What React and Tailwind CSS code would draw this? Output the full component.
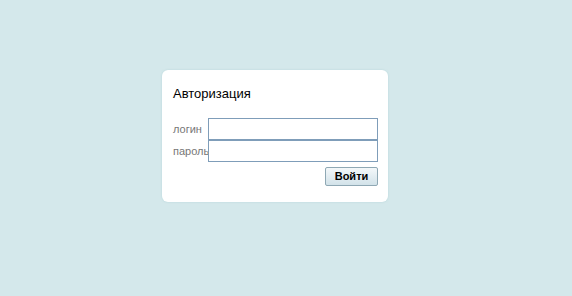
export default function App() {
  return (
    <div
      className="w-full h-[296px] bg-[#d4e8eb] pl-[162px] pt-[70px]"
      style={{ fontFamily: '"Liberation Sans", Arial, sans-serif' }}
    >
      <div className="w-[226px] h-[132px] bg-white rounded-[6px] shadow-[0_0_2px_rgba(160,200,205,0.6)] pl-[11px] pr-[10px] pt-[16px]">
        <p className="text-[13px] leading-[16px] text-black">Авторизация</p>
        <form className="mt-[16px]">
          <div className="flex items-center h-[22px]">
            <label className="w-[35px] text-[11px] text-[#777]">логин</label>
            <input
              type="text"
              className="w-[170px] h-[22px] border border-[#7f9db9] outline-none bg-white"
            />
          </div>
          <div className="flex items-center h-[22px]">
            <label className="w-[35px] text-[11px] text-[#777]">пароль</label>
            <input
              type="password"
              className="w-[170px] h-[22px] border border-[#7f9db9] outline-none bg-white"
            />
          </div>
          <div className="flex justify-end mt-[5px]">
            <button
              type="button"
              className="w-[53px] h-[19px] border border-[#8fa8b4] rounded-[2px] bg-gradient-to-b from-[#f4f8fa] to-[#d2e2e9] text-[11px] font-bold leading-none text-black"
            >
              Войти
            </button>
          </div>
        </form>
      </div>
    </div>
  );
}
